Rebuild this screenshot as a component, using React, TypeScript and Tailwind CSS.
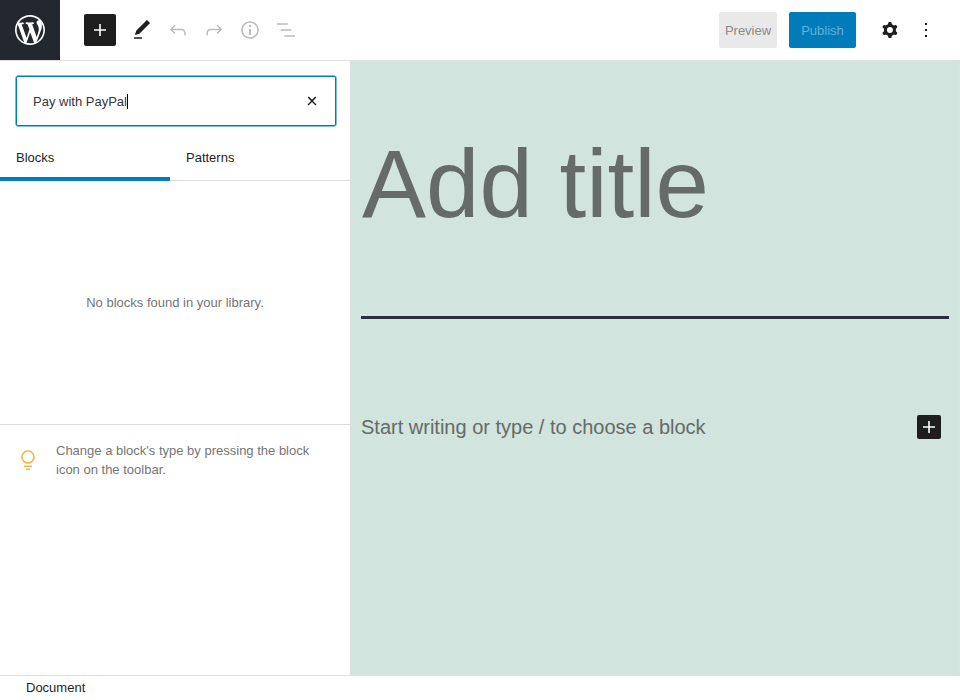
import type { ReactNode } from "react";

const PATHS = {
  plus: "M18 11.2h-5.2V6h-1.6v5.2H6v1.6h5.2V18h1.6v-5.2H18z",
  edit: "M20.1 5.1L16.9 2 6.2 12.7l-1.3 4.4 4.5-1.3L20.1 5.1zM4 20.8h8v-1.5H4v1.5z",
  undo: "M18.3 11.7c-.6-.6-1.4-.9-2.3-.9H6.7l2.9-3.3-1.1-1-4.5 5L8.5 16l1-1-2.7-2.7H16c.5 0 .9.2 1.3.5 1 1 1 3.4 1 4.5v.3h1.5v-.2c0-1.5 0-4.3-1.5-5.7z",
  redo: "M15.6 6.5l-1.1 1 2.9 3.3H8c-.9 0-1.7.3-2.3.9-1.4 1.5-1.4 4.2-1.4 5.6v.2h1.5v-.3c0-1.1 0-3.5 1-4.5.3-.3.7-.5 1.3-.5h9.2L14.5 15l1.1 1.1 4.6-4.6-4.6-5z",
  info: "M12 3.2c-4.8 0-8.8 3.9-8.8 8.8 0 4.8 3.9 8.8 8.8 8.8 4.8 0 8.8-3.9 8.8-8.8 0-4.8-4-8.8-8.8-8.8zm0 16c-4 0-7.2-3.3-7.2-7.2C4.8 8 8 4.8 12 4.8s7.2 3.3 7.2 7.2c0 4-3.2 7.2-7.2 7.2zM11 17h2v-6h-2v6zm0-8h2V7h-2v2z",
  list: "M13.8 5.2H3v1.5h10.8V5.2zm-3.6 12v1.5H21v-1.5H10.2zm7.2-6H6.6v1.5h10.8v-1.5z",
  cog: "M10.289 4.836A1 1 0 0111.275 4h1.306a1 1 0 01.987.836l.244 1.466c.787.26 1.503.679 2.108 1.218l1.393-.522a1 1 0 011.216.437l.653 1.13a1 1 0 01-.23 1.273l-1.148.944a6.025 6.025 0 010 2.435l1.149.946a1 1 0 01.23 1.272l-.653 1.13a1 1 0 01-1.216.437l-1.394-.522c-.605.54-1.32.958-2.108 1.218l-.244 1.466a1 1 0 01-.987.836h-1.306a1 1 0 01-.986-.836l-.244-1.466a5.995 5.995 0 01-2.108-1.218l-1.394.522a1 1 0 01-1.217-.436l-.653-1.131a1 1 0 01.23-1.272l1.149-.946a6.026 6.026 0 010-2.435l-1.148-.944a1 1 0 01-.23-1.272l.653-1.131a1 1 0 011.217-.437l1.393.522a5.994 5.994 0 012.108-1.218l.244-1.466zM14.929 12a3 3 0 11-6 0 3 3 0 016 0z",
  more: "M13 19h-2v-2h2v2zm0-6h-2v-2h2v2zm0-6h-2V5h2v2z",
  close: "M13 11.9l3.3-3.4-1.1-1-3.2 3.3-3.2-3.3-1.1 1 3.3 3.4-3.5 3.6 1 1L12 13l3.5 3.5 1-1z",
  tip: "M12 15.8c-3.7 0-6.8-3-6.8-6.8s3-6.8 6.8-6.8c3.7 0 6.8 3 6.8 6.8s-3.1 6.8-6.8 6.8zm0-12C9.1 3.8 6.8 6.1 6.8 9s2.4 5.2 5.2 5.2c2.9 0 5.2-2.4 5.2-5.2S14.9 3.8 12 3.8zM8 17.5h8V19H8zM10 20.5h4V22h-4z",
  wordpress:
    "M20 10c0-5.51-4.49-10-10-10C4.48 0 0 4.49 0 10c0 5.52 4.48 10 10 10 5.51 0 10-4.48 10-10zM7.78 15.37L4.37 6.22c.55-.02 1.17-.08 1.17-.08.5-.06.44-1.13-.06-1.11 0 0-1.45.11-2.37.11-.18 0-.37 0-.58-.01C4.12 2.69 6.87 1.11 10 1.11c2.33 0 4.45.87 6.05 2.34-.68-.11-1.65.39-1.65 1.58 0 .74.45 1.36.9 2.1.35.61.55 1.36.55 2.46 0 1.49-1.4 5-1.4 5l-3.03-8.37c.54-.02.82-.17.82-.17.5-.05.44-1.25-.06-1.22 0 0-1.44.12-2.38.12-.87 0-2.33-.12-2.33-.12-.5-.03-.56 1.2-.06 1.22l.92.08 1.26 3.41zM17.41 10c.24-.64.74-1.87.43-4.25.7 1.29 1.05 2.71 1.05 4.25 0 3.29-1.73 6.24-4.4 7.78.97-2.59 1.94-5.2 2.92-7.78zM6.1 18.09C3.12 16.65 1.11 13.53 1.11 10c0-1.3.23-2.48.72-3.59C3.25 10.3 4.67 14.2 6.1 18.09zm4.03-6.63l2.58 6.98c-.86.29-1.76.45-2.71.45-.79 0-1.57-.11-2.29-.33.81-2.38 1.62-4.74 2.42-7.1z",
};

function Icon({ name, className = "size-6" }: { name: keyof typeof PATHS; className?: string }) {
  return (
    <svg
      viewBox={name === "wordpress" ? "-2 -2 24 24" : "0 0 24 24"}
      className={`shrink-0 fill-current ${className}`}
      aria-hidden="true"
    >
      <path fillRule={name === "cog" ? "evenodd" : "nonzero"} clipRule="evenodd" d={PATHS[name]} />
    </svg>
  );
}

function ToolButton({ label, disabled, children }: { label: string; disabled?: boolean; children: ReactNode }) {
  return (
    <button
      aria-label={label}
      disabled={disabled}
      className="flex size-9 items-center justify-center text-[#1e1e1e] disabled:text-[#bcbcbc]"
    >
      {children}
    </button>
  );
}

function Header() {
  return (
    <header className="flex h-[61px] shrink-0 items-stretch border-b border-[#e0e0e0] bg-white">
      <a className="flex w-[60px] items-center justify-center bg-[#23282e] text-white" aria-label="View posts">
        <Icon name="wordpress" className="size-9" />
      </a>
      <div className="flex flex-1 items-center pl-6">
        <button
          aria-label="Add block"
          className="mr-2 flex size-8 items-center justify-center rounded-[2px] bg-[#1e1e1e] text-white"
        >
          <Icon name="plus" />
        </button>
        <ToolButton label="Tools"><Icon name="edit" /></ToolButton>
        <ToolButton label="Undo" disabled><Icon name="undo" /></ToolButton>
        <ToolButton label="Redo" disabled><Icon name="redo" /></ToolButton>
        <ToolButton label="Details" disabled><Icon name="info" /></ToolButton>
        <ToolButton label="Outline" disabled><Icon name="list" /></ToolButton>
      </div>
      <div className="flex items-center pr-4">
        <button className="mr-3 h-9 w-[58px] rounded-[2px] bg-[#e9e9e9] pt-0.5 text-[#8a8a8a]">Preview</button>
        <button className="mr-4 h-9 w-[67px] rounded-[2px] bg-[#007cba] pt-0.5 text-[#66b0d6]">Publish</button>
        <ToolButton label="Settings"><Icon name="cog" /></ToolButton>
        <ToolButton label="Options"><Icon name="more" /></ToolButton>
      </div>
    </header>
  );
}

function Inserter() {
  return (
    <aside className="flex w-[351px] shrink-0 flex-col border-r border-[#e0e0e0] bg-white">
      <div className="pt-[15px] pl-4">
        <div className="flex h-[50px] w-[320px] items-center rounded-[2px] border border-[#007cba] pr-[11px] pl-4 text-[#32373c] shadow-[0_0_0_0.5px_#007cba]">
          <span className="pt-0.5">Pay with PayPal</span>
          <span className="h-[15px] w-px bg-black" />
          <button aria-label="Reset search" className="ml-auto text-[#1e1e1e]">
            <Icon name="close" />
          </button>
        </div>
      </div>
      <div className="mt-[7px] flex h-12 border-b border-[#dddddd]">
        <button className="-mb-px w-[170px] border-b-4 border-[#007cba] px-4 pt-1.5 text-left">Blocks</button>
        <button className="px-4 pt-0.5 text-left">Patterns</button>
      </div>
      <p className="flex h-[243px] items-center justify-center text-[#757575]">No blocks found in your library.</p>
      <div className="flex items-center border-t border-[#dddddd] p-4 text-[#757575]">
        <Icon name="tip" className="mr-4 size-6 text-[#f0b849]" />
        <p className="leading-[19px]">Change a block's type by pressing the block icon on the toolbar.</p>
      </div>
    </aside>
  );
}

function Canvas() {
  return (
    <main className="flex-1 border-r border-[#e0e0e0] bg-[#d1e4dd] px-2.5 text-[#646b68]">
      <h1 className="mt-[60px] h-[198px] border-b-[3px] border-[#28303d] pl-px text-[96px] leading-[125px] font-normal">
        Add title
      </h1>
      <div className="mt-24 flex h-6 items-center justify-between pr-2">
        <p className="text-[20px]">Start writing or type / to choose a block</p>
        <button
          aria-label="Add block"
          className="flex size-6 items-center justify-center rounded-[2px] bg-[#1e1e1e] text-white"
        >
          <Icon name="plus" />
        </button>
      </div>
    </main>
  );
}

export default function App() {
  return (
    <div className="flex h-[700px] w-[960px] flex-col overflow-hidden bg-white font-['Liberation_Sans',Arial,sans-serif] text-[13px] text-[#1e1e1e]">
      <Header />
      <div className="flex min-h-0 flex-1">
        <Inserter />
        <Canvas />
      </div>
      <footer className="flex h-[25px] shrink-0 items-center border-t border-[#e0e0e0] bg-white px-[26px]">Document</footer>
    </div>
  );
}
